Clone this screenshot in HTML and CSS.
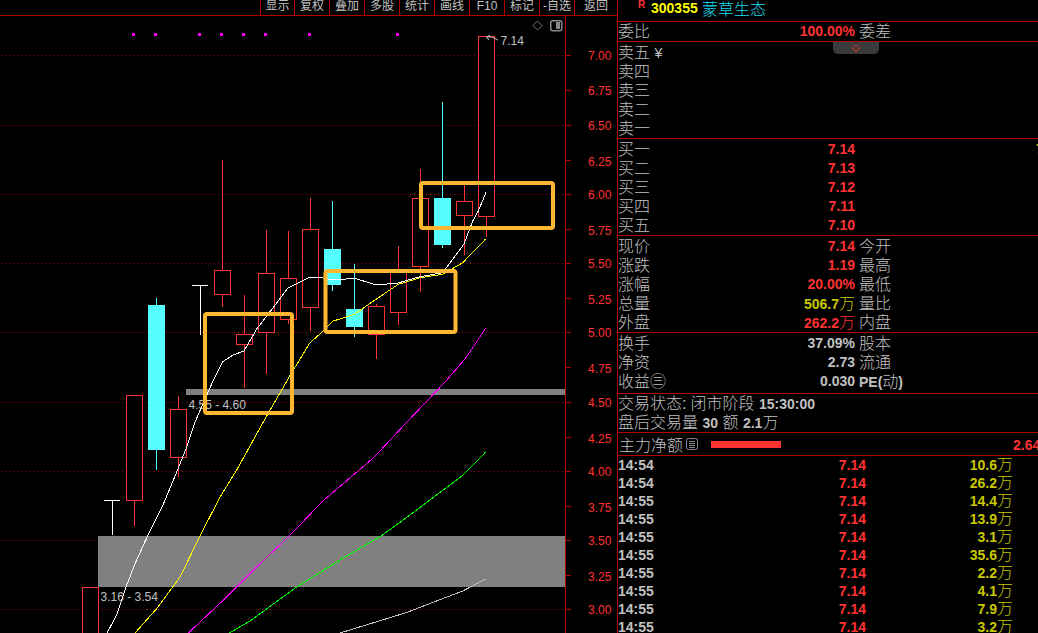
FILE: index.html
```html
<!DOCTYPE html>
<html lang="en">
<head>
  <meta charset="UTF-8" />
  <meta name="viewport" content="width=device-width, initial-scale=1.0"/>
  <title>蒙草生态 300355</title>
  <link rel="stylesheet" href="styles.css">
</head>
<body>
  <div class="app">
    <div class="chart-col">
      <div class="toolbar">
        <span class="tool">显示</span>
        <span class="tool">复权</span>
        <span class="tool">叠加</span>
        <span class="tool">多股</span>
        <span class="tool">统计</span>
        <span class="tool">画线</span>
        <span class="tool">F10</span>
        <span class="tool">标记</span>
        <span class="tool">-自选</span>
        <span class="tool tool-last">返回</span>
      </div>

      <svg class="chart" viewBox="0 16 617 617" width="617" height="617">
        <!-- grid -->
        <path class="grid" d="M2 55.5H565M2 125.5H565M2 194.5H565M2 263.5H565M2 332.5H565M2 402.5H565M2 471.5H565M2 540.5H565M2 609.5H565"/>
        <path class="axis" d="M565.5 16V633M565 55.5H571M565 90.5H571M565 125.5H571M565 160.5H571M565 194.5H571M565 229.5H571M565 263.5H571M565 298.5H571M565 332.5H571M565 367.5H571M565 402.5H571M565 437.5H571M565 471.5H571M565 506.5H571M565 540.5H571M565 575.5H571M565 609.5H571"/>
        <g class="price">
          <text x="588" y="60">7.00</text>
          <text x="588" y="95">6.75</text>
          <text x="588" y="130">6.50</text>
          <text x="588" y="166">6.25</text>
          <text x="588" y="199">6.00</text>
          <text x="588" y="235">5.75</text>
          <text x="588" y="268">5.50</text>
          <text x="588" y="304">5.25</text>
          <text x="588" y="337">5.00</text>
          <text x="588" y="373">4.75</text>
          <text x="588" y="407">4.50</text>
          <text x="588" y="443">4.25</text>
          <text x="588" y="476">4.00</text>
          <text x="588" y="512">3.75</text>
          <text x="588" y="545">3.50</text>
          <text x="588" y="581">3.25</text>
          <text x="588" y="614">3.00</text>
        </g>

        <!-- signal dots -->
        <g class="dot">
          <rect x="132" y="33" width="3" height="3"/>
          <rect x="154" y="33" width="3" height="3"/>
          <rect x="198" y="33" width="3" height="3"/>
          <rect x="220" y="33" width="3" height="3"/>
          <rect x="242" y="33" width="3" height="3"/>
          <rect x="264" y="33" width="3" height="3"/>
          <rect x="308" y="33" width="3" height="3"/>
          <rect x="396" y="33" width="3" height="3"/>
        </g>

        <!-- corner icons -->
        <path class="icon-line" d="M537.5 21L542 25.5L537.5 30L533 25.5Z"/>
        <rect class="icon-box" x="550.75" y="20.75" width="11" height="10" rx="2"/>
        <rect class="icon-fill" x="556" y="22" width="4" height="7"/>

        <!-- zones -->
        <rect class="band" x="186" y="389" width="379" height="6"/>
        <rect class="band" x="98" y="536" width="467" height="51"/>
        <text class="zone-label" x="188.5" y="409">4.55 - 4.60</text>
        <text class="zone-label" x="100.5" y="601">3.16 - 3.54</text>

        <!-- candles -->
        <rect class="up" x="82.5" y="587.5" width="16" height="60"/>
        <path class="flat" d="M104 500.5H120M112.5 500.5V535"/>
        <path class="wick-up" d="M134.5 500V526"/>
        <rect class="up" x="126.5" y="395.5" width="16" height="105"/>
        <path class="wick-down" d="M156.5 298V470"/>
        <rect class="down" x="148" y="305" width="17" height="145"/>
        <path class="wick-up" d="M178.5 396V477"/>
        <rect class="up" x="170.5" y="409.5" width="16" height="48"/>
        <path class="flat" d="M192 285.5H208M200.5 285.5V335"/>
        <path class="wick-up" d="M222.5 160V307"/>
        <rect class="up" x="214.5" y="270.5" width="16" height="24"/>
        <path class="wick-up" d="M244.5 295V388"/>
        <rect class="up" x="236.5" y="334.5" width="16" height="10"/>
        <path class="wick-up" d="M266.5 230V374"/>
        <rect class="up" x="258.5" y="273.5" width="16" height="59"/>
        <path class="wick-up" d="M288.5 231V324"/>
        <rect class="up" x="280.5" y="278.5" width="16" height="41"/>
        <path class="wick-up" d="M310.5 198V331"/>
        <rect class="up" x="302.5" y="229.5" width="16" height="78"/>
        <path class="wick-down" d="M332.5 201V291"/>
        <rect class="down" x="324" y="249" width="17" height="36"/>
        <path class="wick-down" d="M354.5 264V337"/>
        <rect class="down" x="346" y="309" width="17" height="18"/>
        <path class="wick-up" d="M376.5 304V359"/>
        <rect class="up" x="368.5" y="306.5" width="16" height="28"/>
        <path class="wick-up" d="M398.5 246V325"/>
        <rect class="up" x="390.5" y="270.5" width="16" height="42"/>
        <path class="wick-up" d="M420.5 169V292"/>
        <rect class="up" x="412.5" y="198.5" width="16" height="68"/>
        <path class="wick-down" d="M442.5 102V248"/>
        <rect class="down" x="434" y="198" width="17" height="47"/>
        <path class="wick-up" d="M464.5 185V255"/>
        <rect class="up" x="456.5" y="201.5" width="16" height="14"/>
        <path class="wick-up" d="M486.5 216V237"/>
        <rect class="up" x="478.5" y="36.5" width="16" height="180"/>

        <!-- moving averages -->
        <polyline class="ma ma-white" points="107,633 116.7,615 126,587 135,563.7 148,535 163,505 176.7,472 186.7,447 195,422 213,381 222.7,361.7 233,355 244,351 256.7,329 266.7,316 288,288 310,277 322.7,278 333,280 346,279 354,278 376,285 398,283 420,276.7 442.7,272.7 464,244 472.7,221 478.3,211 486.3,191.7"/>
        <polyline class="ma ma-yellow" points="135,633 156.7,608.7 180,577 200,536 220,497 236.7,470 263.3,422 289.3,376.7 310,342.7 323.3,331 333.3,321 346,317 354.3,314.3 376,299.3 398.3,284.3 420.3,277.7 442.7,274.3 462.7,262.7 485.7,239"/>
        <polyline class="ma ma-magenta" points="188.3,633 226.7,597 260,563.7 290,535.3 305,519.7 321.7,502 346,481.3 374.3,457 406,423 446,381 466,357.7 485.7,328.3"/>
        <polyline class="ma ma-green" points="229.3,633 250,621 296.7,587 346,556.3 381,536 406,518 462.7,475.3 476,462 485.7,452"/>
        <polyline class="ma ma-grey" points="340,633 406,612.7 462.7,591 485.7,579"/>

        <!-- high marker -->
        <path class="marker" d="M486.5 37L490 35M486.5 37L489 40M486.5 37L492 37L498 40"/>
        <text class="zone-label" x="500.5" y="45">7.14</text>

        <!-- hand drawn boxes -->
        <rect class="mark-box" x="205" y="314" width="87" height="99" rx="2"/>
        <rect class="mark-box" x="325.5" y="271" width="130" height="61" rx="2"/>
        <rect class="mark-box" x="421" y="183" width="132" height="45" rx="2"/>
      </svg>
    </div>

    <div class="side">
      <div class="head">
        <span class="r-flag">R</span>
        <span class="code">300355</span>
        <span class="name">蒙草生态</span>
      </div>

      <div class="section">
        <div class="row"><span>委比</span><b class="red">100.00%</b><span>委差</span></div>
      </div>

      <div class="toggle">
        <svg width="10" height="8" viewBox="0 0 10 8"><path class="chevron" d="M3 0.5L5 2.5L7 0.5M0.5 3.5L5 7.5L9.5 3.5"/></svg>
      </div>

      <div class="section pad">
        <div class="row"><span>卖五 <i class="yen">¥</i></span></div>
        <div class="row"><span>卖四</span></div>
        <div class="row"><span>卖三</span></div>
        <div class="row"><span>卖二</span></div>
        <div class="row"><span>卖一</span></div>
      </div>

      <div class="section pad">
        <div class="row"><span>买一</span><b class="red">7.14</b><span></span><b class="olive">7</b></div>
        <div class="row"><span>买二</span><b class="red">7.13</b></div>
        <div class="row"><span>买三</span><b class="red">7.12</b></div>
        <div class="row"><span>买四</span><b class="red">7.11</b></div>
        <div class="row"><span>买五</span><b class="red">7.10</b></div>
      </div>

      <div class="section pad">
        <div class="row"><span>现价</span><b class="red">7.14</b><span>今开</span></div>
        <div class="row"><span>涨跌</span><b class="red">1.19</b><span>最高</span></div>
        <div class="row"><span>涨幅</span><b class="red">20.00%</b><span>最低</span></div>
        <div class="row"><span>总量</span><b class="olive">506.7<em>万</em></b><span>量比</span></div>
        <div class="row"><span>外盘</span><b class="red">262.2<em>万</em></b><span>内盘</span></div>
      </div>

      <div class="section pad fin">
        <div class="row"><span>换手</span><b>37.09%</b><span>股本</span></div>
        <div class="row"><span>净资</span><b>2.73</b><span>流通</span></div>
        <div class="row"><span>收益㊂</span><b>0.030</b><span><b>PE(</b>动<b>)</b></span></div>
      </div>

      <div class="section">
        <div class="line">交易状态:<span class="gap-s">闭市阶段</span> <b>15:30:00</b></div>
        <div class="line">盘后交易量 <b>30</b> 额 <b>2.1</b>万</div>
      </div>

      <div class="section main-flow">
        <span>主力净额</span>
        <svg class="list-icon" width="12" height="12" viewBox="0 0 12 12"><rect x="0.5" y="0.5" width="11" height="11" rx="2"/><path d="M3 3.5H9M3 5.5H9M3 7.5H9M3 9.5H9"/></svg>
        <span class="flow-bar"></span>
        <b class="red flow-value">2.64亿</b>
      </div>

      <div class="ticks">
        <div class="tick"><b>14:54</b><b class="red">7.14</b><b class="olive">10.6<em>万</em></b></div>
        <div class="tick"><b>14:54</b><b class="red">7.14</b><b class="olive">26.2<em>万</em></b></div>
        <div class="tick"><b>14:55</b><b class="red">7.14</b><b class="olive">14.4<em>万</em></b></div>
        <div class="tick"><b>14:55</b><b class="red">7.14</b><b class="olive">13.9<em>万</em></b></div>
        <div class="tick"><b>14:55</b><b class="red">7.14</b><b class="olive">3.1<em>万</em></b></div>
        <div class="tick"><b>14:55</b><b class="red">7.14</b><b class="olive">35.6<em>万</em></b></div>
        <div class="tick"><b>14:55</b><b class="red">7.14</b><b class="olive">2.2<em>万</em></b></div>
        <div class="tick"><b>14:55</b><b class="red">7.14</b><b class="olive">4.1<em>万</em></b></div>
        <div class="tick"><b>14:55</b><b class="red">7.14</b><b class="olive">7.9<em>万</em></b></div>
        <div class="tick"><b>14:55</b><b class="red">7.14</b><b class="olive">3.2<em>万</em></b></div>
      </div>
    </div>
  </div>
</body>
</html>
```

FILE: styles.css
```css
html, body {
  margin: 0;
  height: 100%;
  background: #000;
  overflow: hidden;
}
body {
  font-family: "Liberation Sans", "Noto Sans CJK SC", sans-serif;
  color: #c0c0c0;
}
.app {
  display: flex;
  width: 1038px;
  height: 633px;
  overflow: hidden;
}

/* left side */
.chart-col {
  width: 617px;
  flex: none;
}
.toolbar {
  display: flex;
  justify-content: flex-end;
  height: 15px;
  border-bottom: 1px solid #b00000;
}
.tool {
  width: 34px;
  border-left: 1px solid #b00000;
  font-size: 12px;
  line-height: 12px;
  text-align: center;
  white-space: nowrap;
}
.tool:first-child {
  width: 33px;
}
.tool-last {
  width: 42px;
}
.chart {
  display: block;
}
.chart text {
  font-family: "Liberation Sans", sans-serif;
  font-size: 12px;
}
.grid {
  fill: none;
  stroke: #b80000;
  stroke-dasharray: 1 3;
  shape-rendering: crispEdges;
}
.axis {
  fill: none;
  stroke: #b00000;
}
.price text {
  fill: #ff3232;
}
.dot rect {
  fill: #ff00ff;
}
.icon-line {
  fill: none;
  stroke: #777;
}
.icon-box {
  fill: none;
  stroke: #888;
  stroke-width: 1.5;
}
.icon-fill {
  fill: #888;
}
.band {
  fill: #808080;
}
.chart .zone-label {
  fill: #c0c0c0;
}
.up {
  fill: #000;
  stroke: #ff3232;
}
.down {
  fill: #55ffff;
}
.wick-up {
  stroke: #ff3232;
}
.wick-down {
  stroke: #55ffff;
}
.flat {
  fill: none;
  stroke: #fff;
}
.ma {
  fill: none;
  stroke-width: 1;
  shape-rendering: crispEdges;
}
.ma-white { stroke: #fff; }
.ma-yellow { stroke: #ffff00; }
.ma-magenta { stroke: #ff00ff; }
.ma-green { stroke: #00ff00; }
.ma-grey { stroke: #c0c0c0; }
.marker {
  fill: none;
  stroke: #c0c0c0;
}
.mark-box {
  fill: none;
  stroke: #ffb732;
  stroke-width: 4;
}

/* right side */
.side {
  position: relative;
  flex: 1;
  border-left: 1px solid #b00000;
  font-size: 16px;
  font-weight: 300;
  overflow: hidden;
}
.head {
  display: flex;
  align-items: center;
  height: 16px;
  padding: 0 0 5px 20px;
  border-bottom: 1px solid #b00000;
}
.r-flag {
  align-self: flex-start;
  width: 13px;
  font-size: 10px;
  line-height: 9px;
  font-weight: bold;
  color: #ff3232;
}
.code {
  width: 51px;
  font-size: 14px;
  font-weight: bold;
  color: #ffff00;
}
.name {
  color: #18dcf0;
}
.section {
  border-bottom: 1px solid #b00000;
}
.pad {
  padding-top: 1px;
}
.fin {
  padding-bottom: 2px;
}
.row {
  display: grid;
  grid-template-columns: 50px 187px 181px 6px;
  height: 19px;
  line-height: 19px;
  white-space: nowrap;
}
.row > b {
  text-align: right;
}
.row > span:nth-child(3) {
  padding-left: 4px;
}
.row:first-child > b.olive {
  text-align: left;
}
b {
  font-size: 14px;
  font-weight: bold;
}
em {
  font-size: 16px;
  font-style: normal;
  font-weight: 300;
}
.yen {
  font-style: normal;
  font-size: 14px;
}
.red { color: #ff3232; }
.olive { color: #c8c800; }
.toggle {
  position: absolute;
  left: 215px;
  top: 42px;
  width: 46px;
  height: 12px;
  display: flex;
  justify-content: center;
  background: #3a3a3a;
  border-radius: 0 0 5px 5px;
}
.chevron {
  fill: none;
  stroke: #ff3232;
}
.toggle svg {
  margin-top: 2px;
}
.line {
  height: 19px;
  line-height: 19px;
  white-space: nowrap;
}
.gap-s {
  margin-left: 4px;
}
.main-flow {
  display: flex;
  align-items: center;
  height: 22px;
  padding-left: 1px;
  white-space: nowrap;
}
.list-icon {
  flex: none;
  margin-left: 3px;
  fill: none;
  stroke: #888;
}
.flow-bar {
  flex: none;
  width: 70px;
  height: 7px;
  margin-left: 13px;
  background: #ff3232;
}
.flow-value {
  flex: none;
  margin-left: 232px;
}
.tick {
  display: grid;
  grid-template-columns: 50px 198px 147px;
  height: 18px;
  line-height: 18px;
  white-space: nowrap;
}
.tick b:nth-child(n+2) {
  text-align: right;
}
```
